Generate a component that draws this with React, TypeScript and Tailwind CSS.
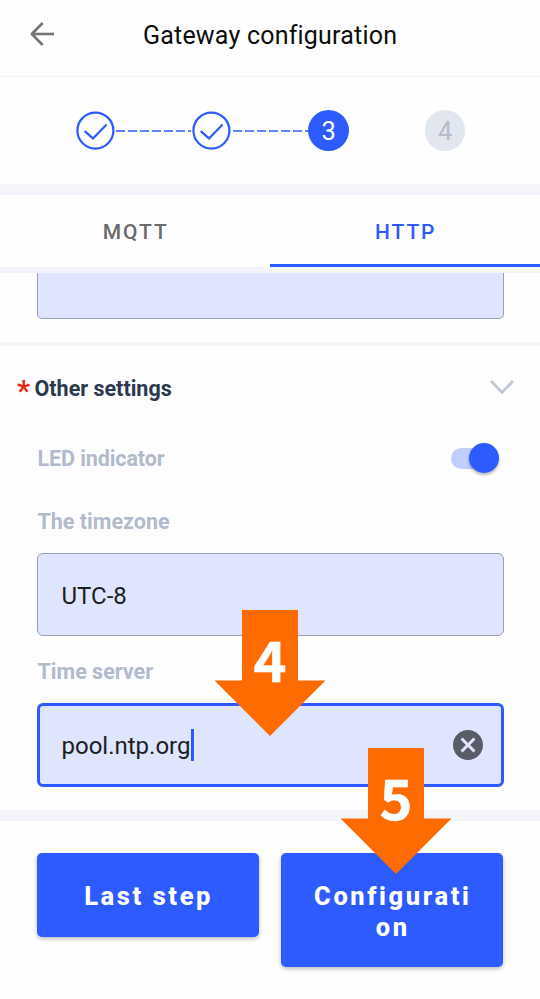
import type { ReactNode } from "react";

function CheckStep() {
  return (
    <svg className="size-[39px] shrink-0" viewBox="0 0 39 39" fill="none" stroke="#2d5bff" strokeWidth="2.2">
      <circle cx="19.4" cy="19.6" r="18" />
      <path d="M8.7 20.2 L17 27.4 L30.6 13.4" />
    </svg>
  );
}

function Connector() {
  return (
    <svg className="h-[2px] w-[75px] shrink-0" viewBox="0 0 75 2">
      <path d="M0 1H75" stroke="#2d5bff" strokeWidth="1.4" strokeDasharray="9 3" />
    </svg>
  );
}

function NumberStep({ children, className }: { children: ReactNode; className: string }) {
  return (
    <div className={`flex size-[40.5px] shrink-0 items-center justify-center rounded-full pt-[2px] text-[25.5px] leading-none ${className}`}>
      {children}
    </div>
  );
}

function Pointer({ label, className }: { label: string; className: string }) {
  return (
    <div className={`absolute h-[126px] w-[112px] ${className}`}>
      <svg className="block size-full" viewBox="0 0 112 126">
        <path d="M28 0H84V70.5H111.5L56 126L0.5 70.5H28Z" fill="#ff6b00" />
        <text
          x="56"
          y="72"
          textAnchor="middle"
          fill="#fff"
          stroke="#fff"
          strokeWidth="0.5"
          className="text-[56px] font-bold [font-family:'Noto_Sans_CJK_SC',sans-serif]"
        >
          {label}
        </text>
      </svg>
    </div>
  );
}

export default function App() {
  return (
    <div className="relative flex h-[999px] w-[540px] flex-col overflow-hidden bg-[#fefefe] [font-family:Roboto,sans-serif]">
      <header className="flex h-[77px] shrink-0 border-b border-[#f3f5fa] pt-[16px]">
        <svg className="mt-[4px] ml-[28px] size-[28px] shrink-0" viewBox="0 0 28 28" fill="none" stroke="#757575" strokeWidth="2.6">
          <path d="M26 14H4" />
          <path d="M14.7 3L3.8 14L14.7 25" strokeLinejoin="round" />
        </svg>
        <h1 className="ml-[87px] pt-px text-[25px] leading-[38px] tracking-[0.2px] whitespace-nowrap text-[#0c0c0c]">Gateway configuration</h1>
      </header>

      <div className="flex h-[107px] shrink-0 items-center pl-[75.5px]">
        <CheckStep />
        <div className="mx-[1.4px]"><Connector /></div>
        <CheckStep />
        <div className="mr-[0.5px] ml-[1.6px]"><Connector /></div>
        <NumberStep className="bg-[#2d5bff] text-white">3</NumberStep>
        <NumberStep className="ml-[76px] bg-[#e2e6ef] text-[#b4bccb]">4</NumberStep>
      </div>

      <div className="h-[11px] shrink-0 bg-[#f4f5fa]" />

      <nav className="flex h-[72px] shrink-0 text-[21px] leading-none font-medium tracking-[1.9px]">
        <div className="flex w-1/2 items-center justify-center pt-[3px] pl-[1.5px] text-[#6b6b6b]">MQTT</div>
        <div className="flex w-1/2 items-center justify-center border-b-[3px] border-[#2d5bff] pt-[6px] pl-[1.5px] text-[#2d5bff]">HTTP</div>
      </nav>
      <div className="h-[6px] shrink-0 bg-[#f4f5fa]" />

      <div className="mr-[36px] ml-[37px] h-[46px] shrink-0 rounded-b-[5px] border-x-[1.5px] border-b-[1.5px] border-[#9a9fb2] bg-[#e0e5ff]" />
      <div className="mt-[23px] h-[4px] shrink-0 bg-[#f4f5fa]" />

      <section className="flex h-[464px] shrink-0 flex-col pr-[36px] pl-[37px] font-bold text-[#b1bbcd]">
        <div className="mt-[28px] -mr-[10px] -ml-[20px] flex h-[30px] items-center">
          <span className="w-[17.5px] pt-[4px] text-[30px] leading-[30px] font-medium text-[#e8230a]">*</span>
          <h2 className="text-[21.5px] leading-[30px] text-[#2b3850]">Other settings</h2>
          <svg className="mb-[4px] ml-auto h-[16px] w-[24px]" viewBox="0 0 24 16" fill="none" stroke="#bfc6d5" strokeWidth="2.7">
            <path d="M1 2L12 13.4L23 2" />
          </svg>
        </div>
        <div className="mt-[37px] flex h-[34px] items-center justify-between">
          <span className="pt-[2px] pl-[0.5px] text-[21.5px] tracking-[-0.1px]">LED indicator</span>
          <div className="relative mr-[6px] h-[21px] w-[47px] rounded-full bg-[#c0cdff]">
            <div className="absolute -top-[5px] -right-[1px] size-[30px] rounded-full bg-[#2d5bff] shadow-[0_2px_3px_rgba(0,0,0,0.3)]" />
          </div>
        </div>
        <div className="mt-[32px] pl-[0.5px] text-[21.5px] leading-[30px]">The timezone</div>
        <div className="mt-[16px] flex h-[83px] shrink-0 items-center rounded-[6px] border-[1.5px] border-[#9a9fb2] bg-[#e0e5ff] pt-[2px] pl-[23.5px] text-[24px] font-normal text-[#1c1d22]">
          UTC-8
        </div>
        <div className="mt-[21px] pl-[0.5px] text-[21.5px] leading-[30px]">Time server</div>
        <div className="mt-[16px] flex h-[84px] shrink-0 items-center rounded-[6px] border-[3px] border-[#2d5bff] bg-[#e0e5ff] pl-[21.5px] text-[24px] font-normal text-[#1c1d22]">
          <span className="pt-[2px]">pool.ntp.org</span>
          <span className="h-[32px] w-[3px] bg-[#2d5bff]" />
          <svg className="mr-[15px] ml-auto size-[36px]" viewBox="0 0 24 24" fill="#595c66">
            <path d="M12 2C6.47 2 2 6.47 2 12s4.47 10 10 10 10-4.47 10-10S17.53 2 12 2zm5 13.59L15.59 17 12 13.41 8.41 17 7 15.59 10.59 12 7 8.41 8.41 7 12 10.59 15.59 7 17 8.41 13.41 12 17 15.59z" />
          </svg>
        </div>
      </section>

      <div className="h-[11px] shrink-0 bg-[#f4f5fa]" />

      <footer className="flex items-start gap-[22.5px] px-[36.5px] pt-[32px] text-center text-[25.5px] leading-[30.5px] font-extrabold tracking-[2.6px] text-white">
        <button className="h-[84px] w-[222.2px] shrink-0 rounded-[5px] bg-[#2d5bff] pt-[3px] pl-[2px] shadow-[0_2px_4px_rgba(0,0,0,0.25)]">Last step</button>
        <button className="h-[114px] w-[222.2px] shrink-0 rounded-[5px] bg-[#2d5bff] pt-[3px] pl-[1px] shadow-[0_2px_4px_rgba(0,0,0,0.25)]">
          Configurati
          <br />
          on
        </button>
      </footer>

      <Pointer label="4" className="top-[610px] left-[214px]" />
      <Pointer label="5" className="top-[748px] left-[340px]" />
    </div>
  );
}
